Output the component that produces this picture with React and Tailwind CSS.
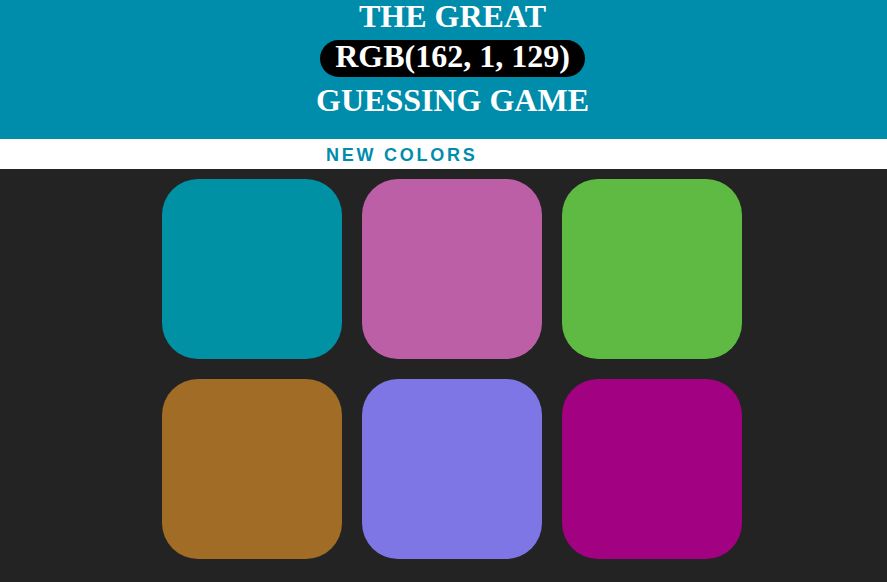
import { useState } from 'react';

const initialColors = [
  'rgb(0, 146, 164)',
  'rgb(188, 95, 167)',
  'rgb(95, 186, 67)',
  'rgb(160, 108, 38)',
  'rgb(127, 118, 230)',
  'rgb(162, 1, 129)',
];

export default function App() {
  const [colors] = useState(initialColors);
  const picked = 'RGB(162, 1, 129)';

  return (
    <div className="min-h-[582px] bg-[#232323]">
      {/* Header */}
      <div
        className="h-[139px] bg-[#008cab] text-white text-center font-bold text-[32px] pl-[18px] flex flex-col items-center"
        style={{ fontFamily: '"Liberation Serif", serif' }}
      >
        <div className="leading-[32px]">THE GREAT</div>
        <span className="bg-black rounded-full px-[15px] h-[37px] leading-[33px] mt-[8px]">
          {picked}
        </span>
        <div className="leading-[32px] mt-[7px]">GUESSING GAME</div>
      </div>

      {/* Stripe */}
      <div
        className="h-[30px] bg-white flex items-center pl-[326px]"
        style={{ fontFamily: '"Liberation Sans", Arial, sans-serif' }}
      >
        <button className="text-[#008cab] font-bold text-[18px] tracking-[2.75px] leading-none uppercase pt-[1px]">
          New Colors
        </button>
      </div>

      {/* Squares */}
      <div className="pl-[162px] pt-[10px] grid grid-cols-[180px_180px_180px] gap-[20px]">
        {colors.map((c, i) => (
          <div
            key={i}
            className="w-[180px] h-[180px] rounded-[36px]"
            style={{ backgroundColor: c }}
          />
        ))}
      </div>
    </div>
  );
}
